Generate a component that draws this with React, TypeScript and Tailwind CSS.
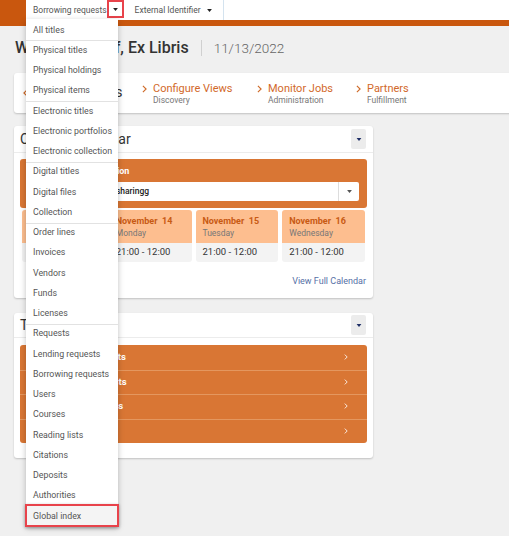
import React from 'react';

const menuGroups: string[][] = [
  ['All titles'],
  ['Physical titles', 'Physical holdings', 'Physical items'],
  ['Electronic titles', 'Electronic portfolios', 'Electronic collection'],
  ['Digital titles', 'Digital files', 'Collection'],
  ['Order lines', 'Invoices', 'Vendors', 'Funds', 'Licenses'],
  ['Requests', 'Lending requests', 'Borrowing requests', 'Users', 'Courses', 'Reading lists', 'Citations', 'Deposits', 'Authorities', 'Global index'],
];

const days = [
  { date: 'November  13', day: 'Sunday' },
  { date: 'November  14', day: 'Monday' },
  { date: 'November  15', day: 'Tuesday' },
  { date: 'November  16', day: 'Wednesday' },
];

const navLinks = [
  { title: 'Configure Views', sub: 'Discovery', w: 'w-[115px]' },
  { title: 'Monitor Jobs', sub: 'Administration', w: 'w-[99px]' },
  { title: 'Partners', sub: 'Fulfillment', w: 'w-[120px]' },
];

const tasks = ['Open lending requests', 'All borrowing requests', 'Overdue loaned items', 'Returns'];

function Caret({ className }: { className?: string }) {
  return (
    <svg viewBox="0 0 8 5" className={className}>
      <path d="M0 0 L8 0 L4 5 Z" fill="currentColor" />
    </svg>
  );
}

function Chevron({ className }: { className?: string }) {
  return (
    <svg viewBox="0 0 6 10" className={className} fill="none" stroke="currentColor" strokeWidth="1.4">
      <polyline points="1,1 5,5 1,9" />
    </svg>
  );
}

function CardHeader({ title, h }: { title: string; h: string }) {
  return (
    <div className={`flex items-center justify-between border-b border-[#ececec] pl-[6px] pr-[7px] ${h}`}>
      <span className="text-[14px] text-[#333]">{title}</span>
      <button className="flex h-[20px] w-[15px] items-center justify-center rounded-[2px] bg-[#ececec]">
        <Caret className="h-[3px] w-[6px] text-[#1f2f66]" />
      </button>
    </div>
  );
}

export default function App() {
  return (
    <div className="relative h-[536px] w-[509px] overflow-hidden bg-[#f0f0f0] font-['Roboto',sans-serif]">
      {/* top bar */}
      <div className="h-[26px] bg-[#c9570e]">
        <div className="ml-[26px] flex h-[20px] bg-white text-[8.5px] text-[#555]">
          <div className="flex items-center pl-[7px]">
            <span>Borrowing requests</span>
            <span className="flex h-[18px] w-[17px] items-center justify-center self-start border-2 border-[#e8434b]">
              <Caret className="h-[3px] w-[5px] text-[#222]" />
            </span>
          </div>
          <div className="flex items-center border-r border-[#d4e3ef] pl-[11px] pr-[11px]">
            <span>External Identifier</span>
            <Caret className="ml-[6px] h-[3px] w-[5px] text-[#222]" />
          </div>
        </div>
      </div>

      <div className="px-[14px]">
        {/* heading */}
        <div className="mt-[11px] flex h-[22px] items-center">
          <span className="pl-[1px] text-[16px] font-medium text-[#333]">Welcome Staff, Ex Libris</span>
          <span className="ml-[12px] h-[16px] w-px bg-[#d0d0d0]" />
          <span className="ml-[12px] text-[13.5px] font-light text-[#666]">11/13/2022</span>
        </div>

        {/* nav card */}
        <div className="mt-[14px] flex h-[40px] w-[520px] items-center rounded-[3px] bg-white shadow-[0_1px_2px_rgba(0,0,0,0.2)]">
          <div className="flex w-[128px] items-center pl-[9px]">
            <Chevron className="h-[8px] w-[5px] rotate-180 text-[#cf6a28]" />
            <span className="ml-[6px] text-[14.5px] text-[#333]">Recent Pages</span>
          </div>
          {navLinks.map((l) => (
            <div key={l.title} className={`flex items-start ${l.w}`}>
              <Chevron className="mt-[3px] h-[8px] w-[5px] text-[#cf6a28]" />
              <div className="ml-[6px] flex flex-col">
                <span className="text-[11px] leading-[13px] text-[#d2692a]">{l.title}</span>
                <span className="text-[8.5px] leading-[10px] text-[#777]">{l.sub}</span>
              </div>
            </div>
          ))}
        </div>

        {/* calendar card */}
        <div className="mt-[13px] h-[172px] w-[359px] rounded-[3px] bg-white shadow-[0_1px_2px_rgba(0,0,0,0.2)]">
          <CardHeader title="Opening Calendar" h="h-[27px]" />
          <div className="px-[6px] pt-[6px]">
            <div className="h-[49px] rounded-[3px] bg-[#d97634] px-[8px] pt-[6px]">
              <div className="text-[9px] font-bold leading-[12px] text-white">Library Opening Location</div>
              <div className="mt-[5px] flex h-[19px] items-center rounded-[2px] bg-white">
                <span className="flex-1 pl-[6px] text-[8.5px] font-medium text-[#222]">Our Library Resource sharingg</span>
                <span className="flex h-full w-[21px] items-center justify-center border-l border-[#ddd]">
                  <Caret className="h-[3px] w-[5px] text-[#555]" />
                </span>
              </div>
            </div>
            <div className="mt-[2px] grid grid-cols-4 gap-[4px] px-[2px]">
              {days.map((d) => (
                <div key={d.date} className="overflow-hidden rounded-[3px]">
                  <div className="h-[33px] whitespace-pre bg-[#fdbe8f] pl-[7px] pt-[5px]">
                    <div className="text-[9px] font-bold leading-[12px] text-[#c85a14]">{d.date}</div>
                    <div className="text-[8.5px] leading-[12px] text-[#777]">{d.day}</div>
                  </div>
                  <div className="flex h-[19px] items-center bg-[#f3f3f3] pl-[7px] text-[9.5px] text-[#333]">21:00 - 12:00</div>
                </div>
              ))}
            </div>
            <div className="mt-[13px] pr-[1px] text-right text-[9px] leading-[12px] text-[#5670a6]">View Full Calendar</div>
          </div>
        </div>

        {/* tasks card */}
        <div className="mt-[15px] h-[145px] w-[359px] rounded-[3px] bg-white shadow-[0_1px_2px_rgba(0,0,0,0.2)]">
          <CardHeader title="Tasks" h="h-[25px]" />
          <div className="px-[6px] pt-[7px]">
            <div className="overflow-hidden rounded-[3px] bg-[#d97634]">
              {tasks.map((t, i) => (
                <div
                  key={t}
                  className={`flex h-[24.5px] items-center justify-between pl-[10px] pr-[19px] ${i > 0 ? 'shadow-[inset_0_1px_0_#e4975f]' : ''}`}
                >
                  <span className="text-[9.5px] font-bold text-white">{t}</span>
                  <Chevron className="h-[6px] w-[4px] text-white" />
                </div>
              ))}
            </div>
          </div>
        </div>
      </div>

      {/* dropdown menu */}
      <div className="absolute left-[26px] top-[19px] w-[92px] bg-white pt-[1px] shadow-[0_2px_6px_rgba(0,0,0,0.25)]">
        {menuGroups.map((g, gi) => (
          <div key={gi} className={gi > 0 ? 'shadow-[inset_0_1px_0_#e2e2e2]' : ''}>
            {g.map((item) => (
              <div
                key={item}
                className="relative flex h-[20.25px] items-center whitespace-nowrap pl-[7px] text-[8.8px] text-[#555]"
              >
                {item === 'Global index' && (
                  <span className="absolute -bottom-[1px] -left-[1px] -right-[1px] -top-[2px] border-2 border-[#e8434b] bg-[#f4f4f4] shadow-[0_1px_3px_rgba(0,0,0,0.3)]" />
                )}
                <span className="relative">{item}</span>
              </div>
            ))}
          </div>
        ))}
      </div>
    </div>
  );
}
